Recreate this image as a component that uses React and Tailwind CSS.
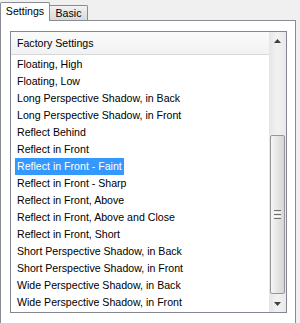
const items = [
  'Floating, High',
  'Floating, Low',
  'Long Perspective Shadow, in Back',
  'Long Perspective Shadow, in Front',
  'Reflect Behind',
  'Reflect in Front',
  'Reflect in Front - Faint',
  'Reflect in Front - Sharp',
  'Reflect in Front, Above',
  'Reflect in Front, Above and Close',
  'Reflect in Front, Short',
  'Short Perspective Shadow, in Back',
  'Short Perspective Shadow, in Front',
  'Wide Perspective Shadow, in Back',
  'Wide Perspective Shadow, in Front',
];

const selected = 6;

const Arrow = ({ down }) => (
  <svg width="7" height="4" viewBox="0 0 7 4" className={down ? 'rotate-180' : ''}>
    <path d="M3.5 0 L7 4 L0 4 Z" fill="#404040" />
  </svg>
);

const App = () => {
  return (
    <div className="w-[300px] h-[323px] overflow-hidden bg-[#f0f0f0] text-black font-['Liberation_Sans',Arial,sans-serif] text-[10.6px] leading-none">
      {/* Tabs */}
      <div className="relative z-10 flex items-end h-[20px]">
        <div className="h-[19px] -mb-px w-[50px] bg-white border border-b-0 border-[#898c95] rounded-t-[2px] flex items-center justify-center pb-[2px]">
          Settings
        </div>
        <div className="h-[15px] w-[38px] bg-gradient-to-b from-[#f2f2f2] to-[#d9d9d9] border border-l-0 border-b-0 border-[#898c95] rounded-tr-[2px] flex items-center justify-center">
          Basic
        </div>
      </div>

      {/* Panel */}
      <div className="w-[296px] h-[330px] bg-white border border-[#898c95] pl-[9px] pt-[10px]">
        <div className="w-[277px] h-[282px] border border-[#828790] flex bg-white">
          {/* List content */}
          <div className="flex-1 flex flex-col">
            <div className="h-[23px] bg-gradient-to-b from-[#fbfbfb] to-[#f1f2f4] border-b border-[#d8d8d8] flex items-center pl-[6px]">
              Factory Settings
            </div>
            <div className="pt-px flex flex-col">
              {items.map((item, i) => (
                <div key={item} className="h-[17px] flex items-center pl-[4px]">
                  <span
                    className={
                      i === selected
                        ? 'h-[17px] flex items-center px-[2px] bg-[#3399ff] text-white'
                        : 'h-[17px] flex items-center px-[2px]'
                    }
                  >
                    {item}
                  </span>
                </div>
              ))}
            </div>
          </div>

          {/* Scrollbar */}
          <div className="w-[17px] flex flex-col bg-gradient-to-r from-[#e6e6e6] via-[#f2f2f2] to-[#e9e9e9]">
            <div className="h-[17px] flex items-center justify-center">
              <Arrow />
            </div>
            <div className="flex-1 flex flex-col px-px pt-[86px] pb-[1px]">
              <div className="flex-1 rounded-[2px] border border-[#979797] bg-gradient-to-r from-[#f5f5f5] via-[#e6e6e6] to-[#d6d6d6] flex flex-col items-center justify-center gap-[1px]">
                <div className="w-[7px] h-px bg-[#6f6f6f]" />
                <div className="w-[7px] h-px bg-[#ffffff]" />
                <div className="w-[7px] h-px bg-[#6f6f6f]" />
                <div className="w-[7px] h-px bg-[#ffffff]" />
                <div className="w-[7px] h-px bg-[#6f6f6f]" />
              </div>
            </div>
            <div className="h-[17px] flex items-center justify-center">
              <Arrow down />
            </div>
          </div>
        </div>
      </div>
    </div>
  );
};

export default App;
